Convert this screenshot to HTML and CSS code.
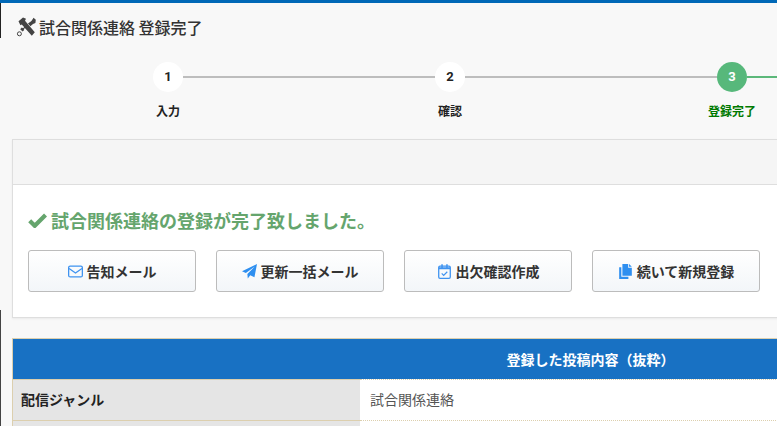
FILE: index.html
```html
<!DOCTYPE html>
<html lang="ja">
<head>
<meta charset="utf-8">
<title>試合関係連絡 登録完了</title>
<link rel="stylesheet" href="styles.css">
</head>
<body>
<div class="edge edge-top"></div>
<div class="edge edge-bottom"></div>
<header class="topbar"></header>
<main class="page">
  <h1 class="title">
    <svg class="title-icon" viewBox="0 0 20 20" aria-hidden="true">
      <path fill="#444" d="M2.5 4.2 7 .4l3 1.4-1 2 9.8 11.4-3 3.6L5.8 7.6 4.4 8.2z"/>
      <path fill="#444" d="M17.6.8 15.4 4 12 6.4l2.4 2.8 2.6-2.2 2.4-1 .4-3.2zM9.4 9.2l-2.4 2-1.2-.6-1.6 1.6 2.4 2.4 1.6-1.6-.4-1 3.4-2.8z"/>
      <circle cx="3.4" cy="16.8" r="2" fill="none" stroke="#444" stroke-width="1"/>
    </svg>
    <span>試合関係連絡 登録完了</span>
  </h1>
  <ol class="steps">
    <li class="step"><span class="num">1</span><span class="label">入力</span></li>
    <li class="step"><span class="num">2</span><span class="label">確認</span></li>
    <li class="step active"><span class="num">3</span><span class="label">登録完了</span></li>
  </ol>
  <section class="card">
    <div class="card-head"></div>
    <div class="card-body">
      <p class="done">
        <svg class="check" viewBox="0 0 18 14" aria-hidden="true"><path fill="none" stroke="#65a56d" stroke-width="4" d="M1.6 7.2 6.4 12 16.6 1.8"/></svg>
        <span>試合関係連絡の登録が完了致しました。</span>
      </p>
      <div class="actions">
        <a class="btn">
          <svg class="ico" viewBox="0 0 14 12" aria-hidden="true"><rect x=".6" y=".9" width="12.8" height="10.2" rx="1.4" fill="none" stroke="#3f93f0" stroke-width="1.2"/><path d="M1 3.2 7 7.4l6-4.2" fill="none" stroke="#3f93f0" stroke-width="1.2"/></svg>
          <span>告知メール</span>
        </a>
        <a class="btn">
          <svg class="ico" viewBox="0 0 14 14" aria-hidden="true"><path fill="#2e8ff0" d="M14 0 11.6 12.4 7.7 10.6 5.4 13.6 5 9.4 12 2.4 3.6 8.4 0 6.8z"/></svg>
          <span>更新一括メール</span>
        </a>
        <a class="btn">
          <svg class="ico" viewBox="0 0 12 14" aria-hidden="true"><rect x=".6" y="2" width="10.8" height="11.4" rx="1.2" fill="none" stroke="#3f93f0" stroke-width="1.2"/><path d="M0.6 3h10.8v2H.6zM3 .2h1.4V3H3zM7.6.2H9V3H7.6z" fill="#3f93f0"/><path d="M3.4 8.8l1.8 1.8 3.4-3.4" fill="none" stroke="#3f93f0" stroke-width="1.1"/></svg>
          <span>出欠確認作成</span>
        </a>
        <a class="btn">
          <svg class="ico" viewBox="0 0 13 14" aria-hidden="true"><path fill="#2e8ff0" d="M3.6 0H9v3.4h3.4V11H3.6z"/><path fill="#2e8ff0" d="M9.8 0 12.4 2.6H9.8zM.6 3h2v9h6.6v2H.6z"/></svg>
          <span>続いて新規登録</span>
        </a>
      </div>
    </div>
  </section>
  <section class="summary">
    <h2 class="summary-head">登録した投稿内容（抜粋）</h2>
    <div class="row">
      <div class="key">配信ジャンル</div>
      <div class="val">試合関係連絡</div>
    </div>
    <div class="row">
      <div class="key"></div>
      <div class="val"></div>
    </div>
  </section>
</main>
</body>
</html>
```
FILE: styles.css
```css
* { box-sizing: border-box; }
html, body { height: 426px; overflow: hidden; }
body {
  margin: 0;
  background: #f8f8f8;
  color: #333;
  font-family: "Noto Sans CJK JP", "Noto Sans", sans-serif;
  position: relative;
}
.edge { position: absolute; left: 0; width: 1px; background: #222; }
.edge-top { top: 3px; height: 35px; }
.edge-bottom { top: 310px; height: 116px; background: #444; }
.topbar { height: 3px; background: #0068b7; }
.page { width: 1180px; padding: 0 0 0 12px; }
.title {
  display: flex;
  align-items: center;
  gap: 3px;
  margin: 0;
  padding: 0 0 2px 4px;
  height: 50px;
  font-size: 16px;
  font-weight: 500;
  line-height: 48px;
  color: #333;
}
.title-icon { width: 20px; height: 20px; flex: none; }
.steps {
  display: flex;
  list-style: none;
  margin: 0;
  padding: 9px 0 0 15px;
  height: 86px;
}
.step {
  position: relative;
  width: 282px;
  display: flex;
  flex-direction: column;
  align-items: center;
  flex: none;
}
.step::after {
  content: "";
  position: absolute;
  left: 156px;
  top: 14px;
  width: 252px;
  height: 2px;
  background: #bdbdbd;
}
.step.active::after { background: #5cb87a; }
.num {
  width: 30px;
  height: 30px;
  border-radius: 50%;
  background: #fff;
  color: #222;
  font: 700 13px/30px Roboto, "Noto Sans", sans-serif;
  text-align: center;
}
.label {
  margin-top: 10px;
  font-size: 12px;
  line-height: 18px;
  font-weight: 700;
  color: #222;
}
.active .num { background: #57b87b; color: #fff; }
.active .label { color: #007a00; }
.card {
  width: 1156px;
  height: 179px;
  background: #fff;
  border: 1px solid #dedede;
  box-shadow: 0 1px 2px rgba(0,0,0,.06);
}
.card-head {
  height: 45px;
  background: #f5f5f5;
  border-bottom: 1px solid #dedede;
}
.card-body { padding: 21px 15px 0; }
.done {
  display: flex;
  align-items: center;
  gap: 4px;
  margin: 0;
  font-size: 18px;
  line-height: 28px;
  font-weight: 700;
  color: #65a56d;
}
.check { width: 19px; height: 15px; flex: none; }
.actions { display: flex; gap: 20px; margin-top: 16px; }
.btn {
  display: flex;
  align-items: center;
  justify-content: center;
  gap: 4px;
  width: 168px;
  height: 42px;
  border: 1px solid #bcbcbc;
  border-radius: 3px;
  background: linear-gradient(#fff, #f3f6f9);
  color: #333;
  font-size: 14px;
  font-weight: 700;
}
.ico { height: 15px; width: 15px; flex: none; }
.summary {
  width: 1156px;
  margin-top: 20px;
  border-top: 1px solid #dccfae;
  border-left: 1px solid #dccfae;
}
.summary-head {
  margin: 0;
  height: 40px;
  background: #1871c3;
  color: #fff;
  font-size: 14px;
  font-weight: 700;
  line-height: 40px;
  text-align: center;
}
.row { display: flex; height: 41px; }
.key {
  width: 347px;
  padding-left: 8px;
  background: #e5e5e5;
  border-top: 1px solid #dccfae;
  color: #222;
  font-size: 14px;
  font-weight: 700;
  line-height: 39px;
}
.val {
  flex: 1;
  padding-left: 10px;
  background: #fff;
  border-top: 1px dotted #dccfae;
  color: #555;
  font-size: 14px;
  line-height: 39px;
}
```
